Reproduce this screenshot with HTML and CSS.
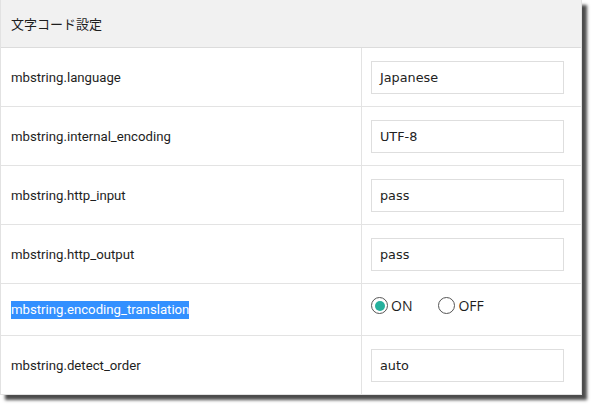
FILE: index.html
```html
<!DOCTYPE html>
<html lang="ja">
<head>
<meta charset="utf-8">
<link rel="stylesheet" href="styles.css">
</head>
<body>
<div class="panel">
  <div class="head">文字コード設定</div>
  <div class="row">
    <div class="label">mbstring.language</div>
    <div class="value"><div class="input">Japanese</div></div>
  </div>
  <div class="row">
    <div class="label">mbstring.internal_encoding</div>
    <div class="value"><div class="input">UTF-8</div></div>
  </div>
  <div class="row">
    <div class="label">mbstring.http_input</div>
    <div class="value"><div class="input">pass</div></div>
  </div>
  <div class="row">
    <div class="label">mbstring.http_output</div>
    <div class="value"><div class="input">pass</div></div>
  </div>
  <div class="row short">
    <div class="label"><span class="sel">mbstring.encoding_translation</span></div>
    <div class="value radios">
      <span class="opt"><span class="radio on"></span>ON</span>
      <span class="opt"><span class="radio"></span>OFF</span>
    </div>
  </div>
  <div class="row last">
    <div class="label">mbstring.detect_order</div>
    <div class="value"><div class="input">auto</div></div>
  </div>
</div>
</body>
</html>
```

FILE: styles.css
```css
html, body {
  margin: 0;
  padding: 0;
  background: #ffffff;
}
body {
  height: 405px;
}
.panel {
  width: 580px;
  border: 1px solid #e2e2e2;
  border-top: none;
  background: #fff;
  box-shadow: 5px 5px 3px rgba(0, 0, 0, 0.7);
  font-family: Roboto, "Noto Sans CJK JP", sans-serif;
  color: #1e1e1e;
}
.head {
  height: 47px;
  background: #f1f1f1;
  border-bottom: 1px solid #dcdcdc;
  font-family: "Noto Sans CJK JP", sans-serif;
  font-size: 13px;
  display: flex;
  align-items: center;
  padding-left: 10px;
}
.row {
  display: grid;
  grid-template-columns: 361px 1fr;
  height: 58px;
  border-bottom: 1px solid #e3e3e3;
}
.row.short {
  height: 51px;
}
.row.last {
  border-bottom: none;
}
.label {
  border-right: 1px solid #e3e3e3;
  display: flex;
  align-items: center;
  padding-left: 10px;
  font-size: 13.2px;
}
.sel {
  background: #3390ff;
  color: #fff;
  line-height: 18px;
}
.value {
  display: flex;
  align-items: center;
  padding-left: 9px;
}
.input {
  width: 183px;
  height: 31px;
  border: 1px solid #dedede;
  display: flex;
  align-items: center;
  padding-left: 8px;
  font-family: "DejaVu Sans", sans-serif;
  font-size: 12.8px;
  color: #222;
}
.radios {
  gap: 26px;
  padding-left: 9px;
  font-size: 14px;
  padding-bottom: 8px;
  font-family: "Open Sans", sans-serif;
}
.opt {
  display: flex;
  align-items: center;
  gap: 3px;
}
.radio {
  width: 15px;
  height: 15px;
  border: 1px solid #555;
  border-radius: 50%;
  display: inline-flex;
  align-items: center;
  justify-content: center;
}
.radio.on::after {
  content: "";
  width: 10px;
  height: 10px;
  border-radius: 50%;
  background: #26b09d;
}
```
